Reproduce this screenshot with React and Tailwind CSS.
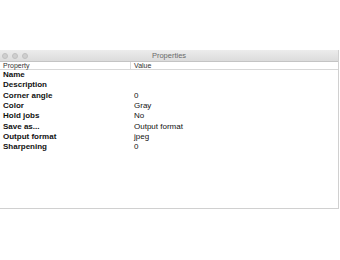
import React from 'react';

const rows = [
  ['Name', ''],
  ['Description', ''],
  ['Corner angle', '0'],
  ['Color', 'Gray'],
  ['Hold jobs', 'No'],
  ['Save as...', 'Output format'],
  ['Output format', 'jpeg'],
  ['Sharpening', '0'],
];

export default function App() {
  return (
    <div className="w-[340px] h-[260px] bg-white pt-[50px]" style={{ fontFamily: '"Liberation Sans", Arial, sans-serif' }}>
      <div className="w-[339px] h-[159px] border-r border-b border-[#d0d0d0] flex flex-col bg-white">
        {/* Title bar */}
        <div className="relative h-[12px] bg-gradient-to-b from-[#ececec] to-[#dcdcdc] border-b border-[#c4c4c4] flex items-center justify-center">
          <div className="absolute left-[2px] top-[3px] flex gap-[4px]">
            <span className="w-[6px] h-[6px] rounded-full bg-[#cfcfcf] border border-[#c0c0c0]" />
            <span className="w-[6px] h-[6px] rounded-full bg-[#cfcfcf] border border-[#c0c0c0]" />
            <span className="w-[6px] h-[6px] rounded-full bg-[#cfcfcf] border border-[#c0c0c0]" />
          </div>
          <span className="text-[7.5px] leading-none text-[#6a6a6a]">Properties</span>
        </div>
        {/* Header */}
        <div className="h-[8px] flex items-center border-b border-[#d8d8d8] bg-white text-[7px] leading-none text-[#333]">
          <div className="w-[131px] pl-[3px] border-r border-[#dcdcdc] h-full flex items-center">Property</div>
          <div className="pl-[3px]">Value</div>
        </div>
        {/* Rows */}
        <div className="flex flex-col pt-[0px]">
          {rows.map(([k, v]) => (
            <div key={k} className="h-[10.3px] flex items-center text-[8px] leading-none text-[#111]">
              <div className="w-[134px] pl-[3px] font-bold">{k}</div>
              <div>{v}</div>
            </div>
          ))}
        </div>
      </div>
    </div>
  );
}
